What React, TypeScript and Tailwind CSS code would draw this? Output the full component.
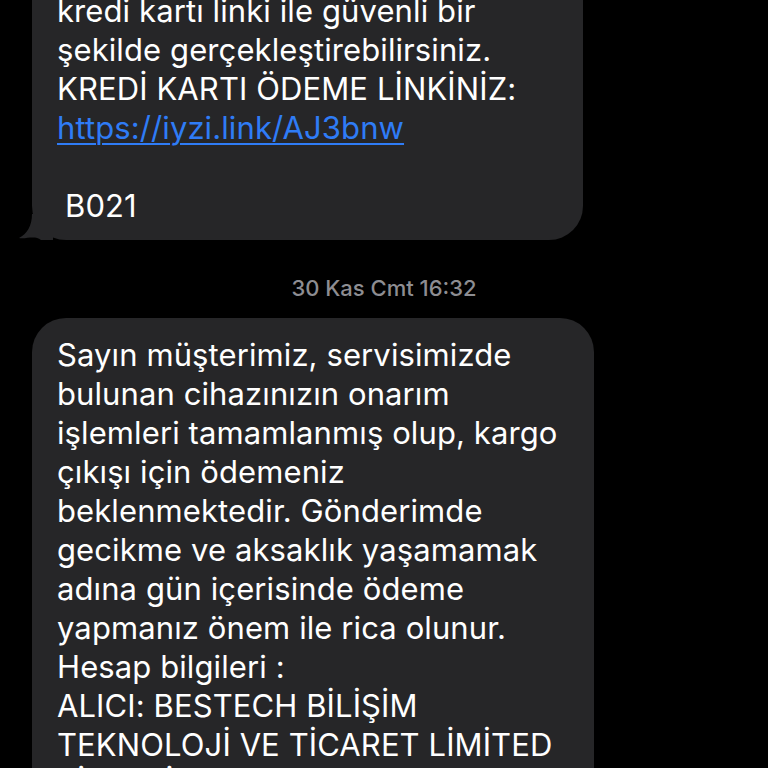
import React from "react";

const font = { fontFamily: "Inter, 'Noto Sans', sans-serif" };

function Tail() {
  return (
    <svg
      className="absolute left-[-13px] bottom-0"
      width="34"
      height="26"
      viewBox="0 0 34 26"
    >
      <path
        d="M34 0 L34 26 L22 26 C16 21 8 25 0 24 C8 20 13 12 13 0 Z"
        fill="#262628"
      />
    </svg>
  );
}

export default function App() {
  return (
    <div
      className="w-[768px] h-[768px] overflow-hidden bg-black text-white"
      style={font}
    >
      <div className="mt-[-64px] flex flex-col">
        <div className="relative ml-[32px] w-[551px] rounded-[34px] bg-[#262628] pl-[25px] pr-4 pt-4 pb-[15px] text-[31px] leading-[39px] tracking-[0.1px]">
          <div>Ödemenizi aşağıdaki</div>
          <div>kredi kartı linki ile güvenli bir</div>
          <div>şekilde gerçekleştirebilirsiniz.</div>
          <div>KREDİ KARTI ÖDEME LİNKİNİZ:</div>
          <div>
            <span className="text-[#2f7cf6] underline decoration-[2px] underline-offset-[4px]">
              https://iyzi.link/AJ3bnw
            </span>
          </div>
          <div>&nbsp;</div>
          <div className="pl-[8px]">B021</div>
          <Tail />
        </div>

        <div className="mt-[36px] mb-[18px] text-center text-[22px] leading-[24px] font-medium text-[#8d8d92]">
          30 Kas Cmt 16:32
        </div>

        <div className="relative ml-[32px] w-[562px] rounded-[34px] bg-[#262628] pl-[25px] pr-4 pt-[17px] pb-4 text-[31px] leading-[39px] tracking-[0.1px]">
          <div>Sayın müşterimiz, servisimizde</div>
          <div>bulunan cihazınızın onarım</div>
          <div>işlemleri tamamlanmış olup, kargo</div>
          <div>çıkışı için ödemeniz</div>
          <div>beklenmektedir. Gönderimde</div>
          <div>gecikme ve aksaklık yaşamamak</div>
          <div>adına gün içerisinde ödeme</div>
          <div>yapmanız önem ile rica olunur.</div>
          <div>Hesap bilgileri :</div>
          <div>ALICI: BESTECH BİLİŞİM</div>
          <div>TEKNOLOJİ VE TİCARET LİMİTED</div>
          <div>ŞİRKETİ</div>
        </div>
      </div>
    </div>
  );
}
